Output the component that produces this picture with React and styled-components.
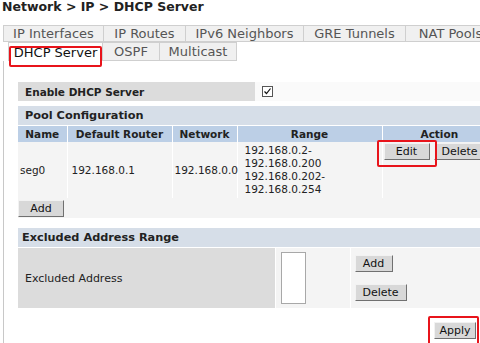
import styled, { createGlobalStyle, css } from "styled-components";

const GlobalStyle = createGlobalStyle`
    html, body {
        margin: 0;
        padding: 0;
        background: #fff;
        overflow: hidden;
    }
    body {
        font-family: "DejaVu Sans", Verdana, sans-serif;
        color: #222;
    }
`;

const Page = styled.div`
    width: 480px;
    height: 343px;
    overflow: hidden;
`;

const Title = styled.h1`
    margin: 0;
    padding: 0 0 0 2px;
    height: 25px;
    font-size: 12.5px;
    line-height: 13px;
    font-weight: bold;
    white-space: nowrap;
`;

const TabRow = styled.div`
    display: flex;
    padding-left: ${({ $indent }) => $indent}px;
    height: ${({ $h }) => $h}px;
`;

// red call-out frame drawn over a control
const highlight = css`
    position: relative;
    &::after {
        content: "";
        position: absolute;
        left: ${({ $hl }) => $hl[0]}px;
        top: ${({ $hl }) => $hl[1]}px;
        right: ${({ $hl }) => $hl[2]}px;
        bottom: ${({ $hl }) => $hl[3]}px;
        border: 2px solid #e8141b;
        border-radius: 2px;
        pointer-events: none;
    }
`;

const Tab = styled.div`
    box-sizing: border-box;
    flex: none;
    width: ${({ $w }) => $w}px;
    height: 100%;
    display: flex;
    align-items: center;
    justify-content: center;
    font-size: 13px;
    color: ${({ $active }) => ($active ? "#111" : "#555")};
    background: ${({ $active }) => ($active ? "#fff" : "#f0f0f0")};
    border: 1px solid #cfcfcf;
    border-left: ${({ $first }) => ($first ? "1px solid #cfcfcf" : "none")};
    border-bottom: ${({ $active }) => ($active ? "none" : "1px solid #cfcfcf")};
    white-space: nowrap;
    ${({ $hl }) => $hl && highlight}
`;

const Panel = styled.div`
    margin-left: 3px;
    border-left: 1px solid #c8c8c8;
    padding: 21px 0 0 14px;
    min-height: 300px;
`;

const EnableRow = styled.div`
    display: flex;
    height: 19px;
    margin-bottom: 5px;
`;

const EnableLabel = styled.div`
    width: 230px;
    padding-left: 7px;
    background: #dcdcdc;
    font-size: 10.5px;
    font-weight: bold;
    display: flex;
    align-items: center;
`;

const EnableValue = styled.div`
    flex: 1;
    background: #fafafa;
    display: flex;
    align-items: center;
    padding-left: 7px;
`;

const CheckBox = styled.span`
    box-sizing: border-box;
    width: 11px;
    height: 11px;
    border: 1px solid #555;
    background: #fff;
    display: flex;
    align-items: center;
    justify-content: center;
`;

const Table = styled.table`
    border-collapse: collapse;
    width: 560px;
    table-layout: fixed;
    font-size: 11px;
`;

const SectionHead = styled.th`
    background: #d6dee8;
    text-align: left;
    font-size: 11.3px;
    font-weight: bold;
    height: 19px;
    padding: 0 0 0 ${({ $pl }) => $pl}px;
    border-bottom: 1px solid #fff;
`;

const ColHead = styled.th`
    background: #bccfe6;
    font-size: 10.5px;
    font-weight: bold;
    height: 16px;
    padding: 0 ${({ $pl }) => ($pl !== undefined ? `0 0 ${$pl}px` : "0")};
    text-align: ${({ $pl }) => ($pl !== undefined ? "left" : "center")};
    border-right: 1px solid #fff;
    white-space: nowrap;
`;

const Cell = styled.td`
    background: ${({ $bg }) => $bg || "#f4f4f4"};
    font-size: ${({ $fs }) => $fs || 10.5}px;
    padding: ${({ $pad }) => $pad || "0 0 0 3px"};
    vertical-align: ${({ $valign }) => $valign || "middle"};
    border-right: 1px solid #fff;
    height: ${({ $h }) => ($h ? `${$h}px` : "auto")};
    white-space: nowrap;
    line-height: 13px;
`;

const Button = styled.button`
    box-sizing: border-box;
    font-family: "DejaVu Sans", Verdana, sans-serif;
    font-size: 11px;
    color: #111;
    height: 17px;
    width: ${({ $w }) => $w}px;
    padding: 0;
    background: #d8d8d8;
    border: 1px solid;
    border-color: #f2f2f2 #707070 #707070 #f2f2f2;
    display: block;
    ${({ $hl }) => $hl && highlight}
`;

const ButtonPair = styled.div`
    display: flex;
    gap: 4px;
    padding-top: 1px;
`;

const Gap = styled.div`
    height: ${({ $h }) => $h}px;
`;

const ListBox = styled.div`
    box-sizing: border-box;
    width: 25px;
    height: 52px;
    background: #fff;
    border: 1px solid #a8a8a8;
`;

const ButtonStack = styled.div`
    display: flex;
    flex-direction: column;
    gap: 12px;
`;

const Footer = styled.div`
    display: flex;
    justify-content: flex-end;
    padding: 14px 4px 0 0;
`;

const ranges = ["192.168.0.2-", "192.168.0.200", "192.168.0.202-", "192.168.0.254"];

export default function App() {
    return (
        <Page>
            <GlobalStyle />
            <Title>Network &gt; IP &gt; DHCP Server</Title>
            <TabRow $indent={3} $h={17}>
                <Tab $w={101} $first>IP Interfaces</Tab>
                <Tab $w={82}>IP Routes</Tab>
                <Tab $w={118}>IPv6 Neighbors</Tab>
                <Tab $w={102}>GRE Tunnels</Tab>
                <Tab $w={90}>NAT Pools</Tab>
            </TabRow>
            <TabRow $indent={8} $h={19}>
                <Tab $w={95} $first $active $hl={[0, 3, 0, -6]}>DHCP Server</Tab>
                <Tab $w={57}>OSPF</Tab>
                <Tab $w={77}>Multicast</Tab>
            </TabRow>
            <Panel>
                <EnableRow>
                    <EnableLabel>Enable DHCP Server</EnableLabel>
                    <EnableValue>
                        <CheckBox>
                            <svg width="9" height="9" viewBox="0 0 9 9">
                                <path d="M1.5 4.5 L3.5 6.5 L7.5 1.5" fill="none" stroke="#111" strokeWidth="1.2" />
                            </svg>
                        </CheckBox>
                    </EnableValue>
                </EnableRow>
                <Table>
                    <colgroup>
                        <col style={{ width: 49 }} />
                        <col style={{ width: 105 }} />
                        <col style={{ width: 65 }} />
                        <col style={{ width: 145 }} />
                        <col />
                    </colgroup>
                    <thead>
                        <tr>
                            <SectionHead colSpan={5} $pl={7}>Pool Configuration</SectionHead>
                        </tr>
                        <tr>
                            <ColHead>Name</ColHead>
                            <ColHead>Default Router</ColHead>
                            <ColHead>Network</ColHead>
                            <ColHead>Range</ColHead>
                            <ColHead $pl={38}>Action</ColHead>
                        </tr>
                    </thead>
                    <tbody>
                        <tr>
                            <Cell $h={56} $pad="0 0 0 2px">seg0</Cell>
                            <Cell $pad="0 0 0 4px">192.168.0.1</Cell>
                            <Cell $pad="0 0 0 2px">192.168.0.0</Cell>
                            <Cell $pad="2px 0 2px 7px">
                                {ranges.map((r) => (
                                    <div key={r}>{r}</div>
                                ))}
                            </Cell>
                            <Cell $valign="top" $pad="0 0 0 1px">
                                <ButtonPair>
                                    <Button $w={46} $hl={[-8, -4, -8, -8]}>Edit</Button>
                                    <Button $w={52}>Delete</Button>
                                </ButtonPair>
                            </Cell>
                        </tr>
                        <tr>
                            <Cell colSpan={5} $h={20} $pad="0">
                                <Button $w={46}>Add</Button>
                            </Cell>
                        </tr>
                    </tbody>
                </Table>
                <Gap $h={10} />
                <Table>
                    <colgroup>
                        <col style={{ width: 257 }} />
                        <col style={{ width: 75 }} />
                        <col />
                    </colgroup>
                    <thead>
                        <tr>
                            <SectionHead colSpan={3} $pl={4}>Excluded Address Range</SectionHead>
                        </tr>
                    </thead>
                    <tbody>
                        <tr>
                            <Cell $bg="#dcdcdc" $fs={11} $h={60} $pad="0 0 0 7px">Excluded Address</Cell>
                            <Cell $pad="0 0 0 5px">
                                <ListBox />
                            </Cell>
                            <Cell $pad="0 0 0 4px">
                                <ButtonStack>
                                    <Button $w={38}>Add</Button>
                                    <Button $w={52}>Delete</Button>
                                </ButtonStack>
                            </Cell>
                        </tr>
                    </tbody>
                </Table>
                <Footer>
                    <Button $w={42} $hl={[-7, -7, -4, -7]}>Apply</Button>
                </Footer>
            </Panel>
        </Page>
    );
}
